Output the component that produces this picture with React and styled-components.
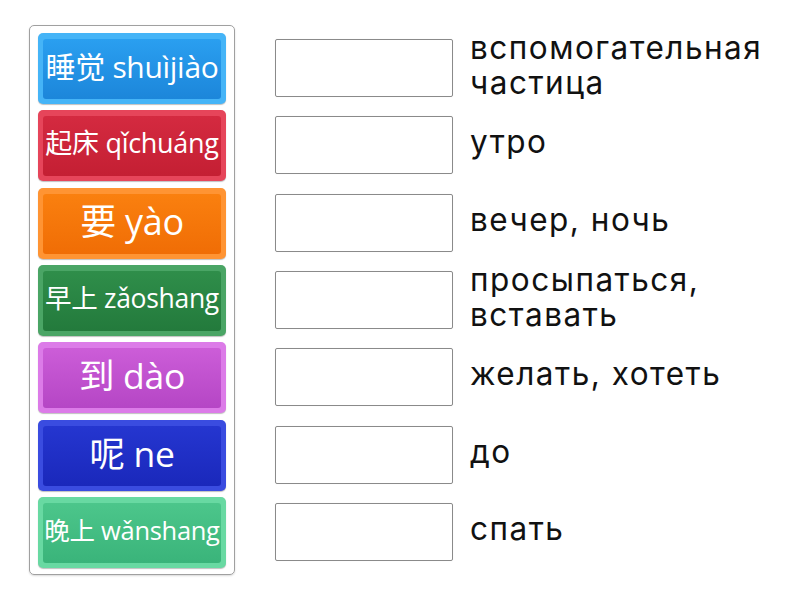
import styled, { createGlobalStyle } from "styled-components";

const GlobalStyle = createGlobalStyle`
	body {
		margin: 0;
		background: #fff;
	}
`;

const Page = styled.div`
	width: 800px;
	height: 600px;
	display: flex;
	align-items: flex-start;
	padding: 25px 0 0 29px;
	box-sizing: border-box;
`;

const TileColumn = styled.div`
	width: 206px;
	height: 550px;
	box-sizing: border-box;
	border: 1px solid #a0a0a0;
	border-radius: 5px;
	padding: 7px 8px 0 8px;
	display: flex;
	flex-direction: column;
	gap: 6.33px;
	box-shadow: 0 1px 2px rgba(0, 0, 0, 0.15);
`;

const Tile = styled.div`
	height: 71px;
	border-radius: 5px;
	background: ${(p) => p.$light};
	padding: 6px 5px 5px 5px;
	box-sizing: border-box;
	box-shadow: 0 1px 1px rgba(0, 0, 0, 0.25);
`;

const TileFace = styled.div`
	height: 100%;
	box-sizing: border-box;
	border-radius: 3px;
	background: linear-gradient(${(p) => p.$base}, ${(p) => p.$dark});
	display: flex;
	align-items: center;
	justify-content: center;
	color: #fff;
	font-family: "Open Sans", "Noto Sans CJK SC", sans-serif;
	font-size: ${(p) => p.$size}px;
	white-space: nowrap;
	letter-spacing: -0.3px;
	padding-bottom: 9px;
`;

const MatchColumn = styled.div`
	display: flex;
	flex-direction: column;
	margin-left: 40px;
	padding-top: 4.5px;
`;

const MatchRow = styled.div`
	height: 77.33px;
	display: flex;
	align-items: center;
	gap: 17px;
`;

const DropBox = styled.div`
	width: 178px;
	height: 58px;
	box-sizing: border-box;
	border: 1px solid #8a8a8a;
	border-radius: 2px;
	flex-shrink: 0;
	box-shadow: 0 0 1px rgba(0, 0, 0, 0.1);
`;

const Meaning = styled.div`
	font-family: Inter, "Noto Sans", sans-serif;
	font-size: 31.5px;
	letter-spacing: 1.5px;
	line-height: 35.5px;
	color: #111;
	margin-top: ${(p) => (p.$two ? "-6px" : "-7px")};
`;

const tiles = [
	{ text: "睡觉 shuìjiào", size: 30, light: "#45b4f7", base: "#2a9ff0", dark: "#1c86da" },
	{ text: "起床 qǐchuáng", size: 27, light: "#e6455a", base: "#d42a40", dark: "#c41f33" },
	{ text: "要 yào", size: 36, light: "#ff9433", base: "#fa800f", dark: "#f06d05" },
	{ text: "早上 zǎoshang", size: 26.5, light: "#4aa565", base: "#2f8e4a", dark: "#237a3c" },
	{ text: "到 dào", size: 35.5, light: "#dc7be8", base: "#cc5dd8", dark: "#b546c5" },
	{ text: "呢 ne", size: 35.5, light: "#3a4ce0", base: "#2536d0", dark: "#1a28bb" },
	{ text: "晚上 wǎnshang", size: 25.5, light: "#68d9a2", base: "#4cc68b", dark: "#3ab47a" },
];

const meanings = [
	"вспомогательная\nчастица",
	"утро",
	"вечер, ночь",
	"просыпаться,\nвставать",
	"желать, хотеть",
	"до",
	"спать",
];

export default function App() {
	return (
		<>
			<GlobalStyle />
			<Page>
				<TileColumn>
					{tiles.map((t) => (
						<Tile key={t.text} $light={t.light}>
							<TileFace $base={t.base} $dark={t.dark} $size={t.size}>
								{t.text}
							</TileFace>
						</Tile>
					))}
				</TileColumn>
				<MatchColumn>
					{meanings.map((m) => (
						<MatchRow key={m}>
							<DropBox />
							<Meaning $two={m.includes("\n")}>
								{m.split("\n").map((line) => (
									<div key={line}>{line}</div>
								))}
							</Meaning>
						</MatchRow>
					))}
				</MatchColumn>
			</Page>
		</>
	);
}
